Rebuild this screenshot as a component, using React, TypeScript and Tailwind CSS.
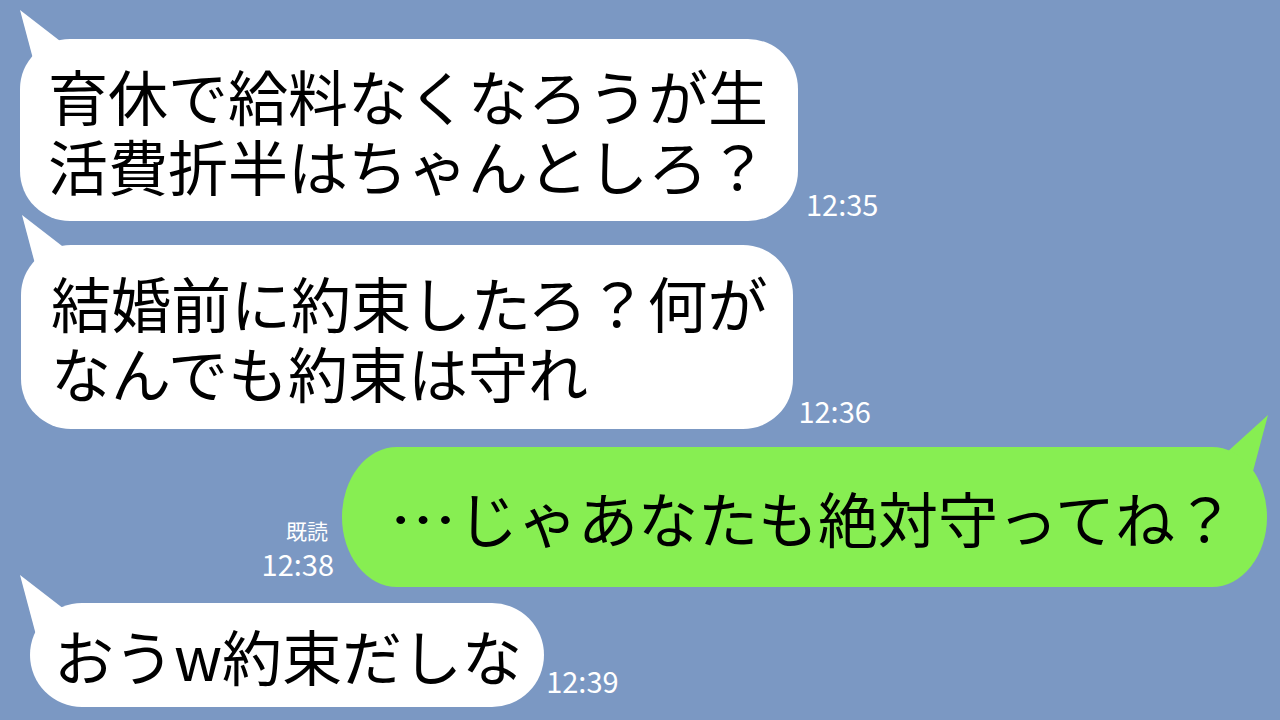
import React from "react";

const FONT = { fontFamily: '"Noto Sans CJK JP", "Noto Sans", sans-serif' };

function LeftTail({ x, y }: { x: number; y: number }) {
  return (
    <svg
      className="absolute"
      style={{ left: x, top: y }}
      width="60"
      height="70"
      viewBox="0 0 60 70"
    >
      <polygon points="0,0 44,34 44,60 16,60" fill="#ffffff" />
    </svg>
  );
}

function Time({ t }: { t: string }) {
  return (
    <span className="text-[29px] leading-none text-white" style={FONT}>
      {t}
    </span>
  );
}

export default function App() {
  return (
    <div
      className="w-[1280px] h-[720px] overflow-hidden bg-[#7b98c3] flex flex-col"
      style={FONT}
    >
      {/* Message 1 */}
      <div className="flex items-end ml-[20px] mt-[39px]">
        <div className="relative">
          <LeftTail x={0} y={-29} />
          <div className="relative bg-white rounded-[50px] pl-[28px] pr-[30px] pt-[21px] pb-[21px] text-[60px] leading-[70px] text-black whitespace-nowrap">
            育休で給料なくなろうが生
            <br />
            活費折半はちゃんとしろ？
          </div>
        </div>
        <div className="ml-[8px] mb-[0px]">
          <Time t="12:35" />
        </div>
      </div>

      {/* Message 2 */}
      <div className="flex items-end ml-[21px] mt-[24px]">
        <div className="relative">
          <LeftTail x={1} y={-30} />
          <div className="relative bg-white rounded-[50px] pl-[30px] pr-[26px] pt-[22px] pb-[22px] text-[60px] leading-[70px] text-black whitespace-nowrap">
            結婚前に約束したろ？何が
            <br />
            なんでも約束は守れ
          </div>
        </div>
        <div className="ml-[5px] mb-[1px]">
          <Time t="12:36" />
        </div>
      </div>

      {/* Message 3 (mine) */}
      <div className="flex items-end justify-end mr-[13px] mt-[18px]">
        <div className="flex flex-col items-end mr-[8px] mb-[9px] text-white">
          <span className="text-[21px] leading-none mb-[8px] mr-[6px]">既読</span>
          <Time t="12:38" />
        </div>
        <div className="relative">
          <svg
            className="absolute"
            style={{ right: -1, top: -32 }}
            width="60"
            height="70"
            viewBox="0 0 60 70"
          >
            <polygon points="60,0 44,60 10,60 18,38" fill="#87ee52" />
          </svg>
          <div className="relative bg-[#87ee52] rounded-[55px_/_70px] pl-[46px] pr-[32px] py-[35px] text-[60px] leading-[70px] text-black whitespace-nowrap">
            <span className="inline-block w-[70px] text-center scale-x-[1.12]">…</span>
            じゃあなたも絶対守ってね？
          </div>
        </div>
      </div>

      {/* Message 4 */}
      <div className="flex items-end ml-[30px] mt-[16px]">
        <div className="relative">
          <LeftTail x={-10} y={-28} />
          <div className="relative bg-white rounded-[52px] pl-[24px] pr-[22px] py-[17px] text-[60px] leading-[70px] text-black whitespace-nowrap">
            おうw約束だしな
          </div>
        </div>
        <div className="ml-[2px] mb-[9px]">
          <Time t="12:39" />
        </div>
      </div>
    </div>
  );
}
